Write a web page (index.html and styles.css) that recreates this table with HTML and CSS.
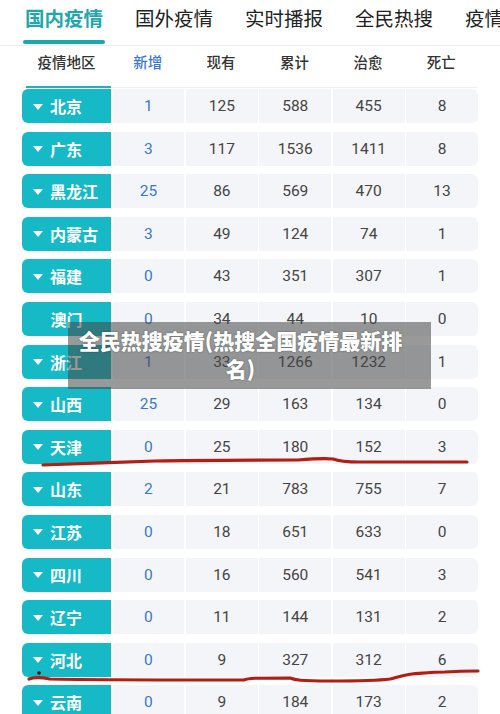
FILE: index.html
```html
<!DOCTYPE html>
<html lang="zh-CN">
<head>
<meta charset="utf-8">
<link rel="stylesheet" href="styles.css">
</head>
<body>
<div class="page">
  <nav class="tabs">
    <div class="tab active">国内疫情</div>
    <div class="tab">国外疫情</div>
    <div class="tab">实时播报</div>
    <div class="tab">全民热搜</div>
    <div class="tab">疫情</div>
  </nav>
  <div class="head">
    <div class="hc region-h">疫情地区</div>
    <div class="hc blue">新增</div>
    <div class="hc">现有</div>
    <div class="hc">累计</div>
    <div class="hc">治愈</div>
    <div class="hc">死亡</div>
  </div>
  <div class="rows">
    <div class="row"><div class="region"><span class="tri"></span>北京</div><div class="c blue">1</div><div class="c">125</div><div class="c">588</div><div class="c">455</div><div class="c">8</div></div>
    <div class="row"><div class="region"><span class="tri"></span>广东</div><div class="c blue">3</div><div class="c">117</div><div class="c">1536</div><div class="c">1411</div><div class="c">8</div></div>
    <div class="row"><div class="region"><span class="tri"></span>黑龙江</div><div class="c blue">25</div><div class="c">86</div><div class="c">569</div><div class="c">470</div><div class="c">13</div></div>
    <div class="row"><div class="region"><span class="tri"></span>内蒙古</div><div class="c blue">3</div><div class="c">49</div><div class="c">124</div><div class="c">74</div><div class="c">1</div></div>
    <div class="row"><div class="region"><span class="tri"></span>福建</div><div class="c blue">0</div><div class="c">43</div><div class="c">351</div><div class="c">307</div><div class="c">1</div></div>
    <div class="row"><div class="region center">澳门</div><div class="c blue">0</div><div class="c">34</div><div class="c">44</div><div class="c">10</div><div class="c">0</div></div>
    <div class="row"><div class="region"><span class="tri"></span>浙江</div><div class="c blue">1</div><div class="c">33</div><div class="c">1266</div><div class="c">1232</div><div class="c">1</div></div>
    <div class="row"><div class="region"><span class="tri"></span>山西</div><div class="c blue">25</div><div class="c">29</div><div class="c">163</div><div class="c">134</div><div class="c">0</div></div>
    <div class="row"><div class="region"><span class="tri"></span>天津</div><div class="c blue">0</div><div class="c">25</div><div class="c">180</div><div class="c">152</div><div class="c">3</div></div>
    <div class="row"><div class="region"><span class="tri"></span>山东</div><div class="c blue">2</div><div class="c">21</div><div class="c">783</div><div class="c">755</div><div class="c">7</div></div>
    <div class="row"><div class="region"><span class="tri"></span>江苏</div><div class="c blue">0</div><div class="c">18</div><div class="c">651</div><div class="c">633</div><div class="c">0</div></div>
    <div class="row"><div class="region"><span class="tri"></span>四川</div><div class="c blue">0</div><div class="c">16</div><div class="c">560</div><div class="c">541</div><div class="c">3</div></div>
    <div class="row"><div class="region"><span class="tri"></span>辽宁</div><div class="c blue">0</div><div class="c">11</div><div class="c">144</div><div class="c">131</div><div class="c">2</div></div>
    <div class="row"><div class="region"><span class="tri"></span>河北</div><div class="c blue">0</div><div class="c">9</div><div class="c">327</div><div class="c">312</div><div class="c">6</div></div>
    <div class="row"><div class="region"><span class="tri"></span>云南</div><div class="c blue">0</div><div class="c">9</div><div class="c">184</div><div class="c">173</div><div class="c">2</div></div>
  </div>
  <svg class="ink" width="500" height="714" viewBox="0 0 500 714">
    <path d="M43 465 C70 464 120 462 155 461 C200 460 260 460 298 460 C310 459 325 458 333 459 C338 461 345 462 360 462 C400 462 440 462 467 462" fill="none" stroke="#b31d12" stroke-width="3.2" stroke-linecap="round"/>
    <path d="M29 679 C34 677 40 677 50 679 C90 680 180 680 244 680 C248 678 255 678 290 678 C295 680 300 681 330 681 C360 681 375 681 390 679 C398 677 404 675 412 674 C425 673 435 672 445 672 C460 671 470 671 478 671" fill="none" stroke="#b31d12" stroke-width="3.2" stroke-linecap="round"/>
    <circle cx="39" cy="673" r="1.8" fill="#111"/>
  </svg>
  <div class="overlay">全民热搜疫情(热搜全国疫情最新排名)</div>
</div>
</body>
</html>
```

FILE: styles.css
```css
* { box-sizing: border-box; }
html, body { margin: 0; padding: 0; background: #fff; }
body {
  font-family: Roboto, "Noto Sans CJK SC", sans-serif;
  color: #333;
  width: 500px;
  height: 714px;
  overflow: hidden;
}
.page { position: relative; width: 500px; height: 714px; overflow: hidden; }

.tabs {
  display: flex;
  gap: 32px;
  padding-left: 25px;
  height: 46px;
  border-bottom: 1px solid #eeeeee;
  white-space: nowrap;
  overflow: hidden;
}
.tab {
  font-family: "Noto Sans CJK SC", sans-serif;
  font-size: 19.5px;
  line-height: 24px;
  padding-top: 6px;
  color: #222;
  flex: none;
}
.tab.active {
  color: #1ea8ad;
  font-weight: 700;
}
.tab.active::after {
  content: "";
  display: block;
  height: 4px;
  margin: 10px -2px 0;
  border-radius: 2px;
  background: #1ea8ad;
}

.head {
  display: flex;
  margin: 0 22px;
  height: 42px;
  border-bottom: 1px solid #f0f0f0;
}
.hc {
  flex: 1;
  display: flex;
  align-items: center;
  justify-content: center;
  font-family: "Noto Sans CJK SC", sans-serif;
  font-size: 14.5px;
  font-weight: 500;
  color: #333;
  padding-bottom: 10px;
}
.hc.region-h {
  flex: none;
  border-bottom: 2px solid #18b4bf;
  margin-bottom: -1px;
  margin-left: 4px;
  width: 85px;
  padding-right: 4px;
}
.hc.blue { color: #3a78d0; }

.rows {
  display: flex;
  flex-direction: column;
  gap: 8.6px;
  padding-top: 1px;
}
.row {
  display: flex;
  gap: 1.5px;
  margin: 0 22px;
  height: 34px;
}
.region {
  flex: none;
  width: 89px;
  background: #15bac6;
  border-radius: 6px 0 0 6px;
  color: #fff;
  font-family: "Noto Sans CJK SC", sans-serif;
  font-weight: 700;
  font-size: 16px;
  display: flex;
  align-items: center;
  padding-left: 11px;
}
.region.center { justify-content: center; padding-left: 0; }
.tri {
  width: 0;
  height: 0;
  border-left: 5px solid transparent;
  border-right: 5px solid transparent;
  border-top: 6px solid #fff;
  margin-right: 7px;
  margin-top: 1px;
}
.c {
  flex: 1;
  background: #f4f5f8;
  display: flex;
  align-items: center;
  justify-content: center;
  font-size: 15.5px;
  color: #444;
}
.c:last-child { border-radius: 0 6px 6px 0; }
.c.blue { color: #3a78d0; }

.ink {
  position: absolute;
  left: 0;
  top: 0;
  pointer-events: none;
}
.overlay {
  position: absolute;
  left: 68px;
  top: 322px;
  width: 363px;
  height: 67px;
  padding: 4px 26px 0 8px;
  background: rgba(70, 70, 70, 0.55);
  color: #fff;
  font-family: "Noto Sans CJK SC", sans-serif;
  font-weight: 900;
  font-size: 21px;
  line-height: 28px;
  text-align: center;
  text-shadow: 0 0 2px rgba(0,0,0,0.4);
}
```
